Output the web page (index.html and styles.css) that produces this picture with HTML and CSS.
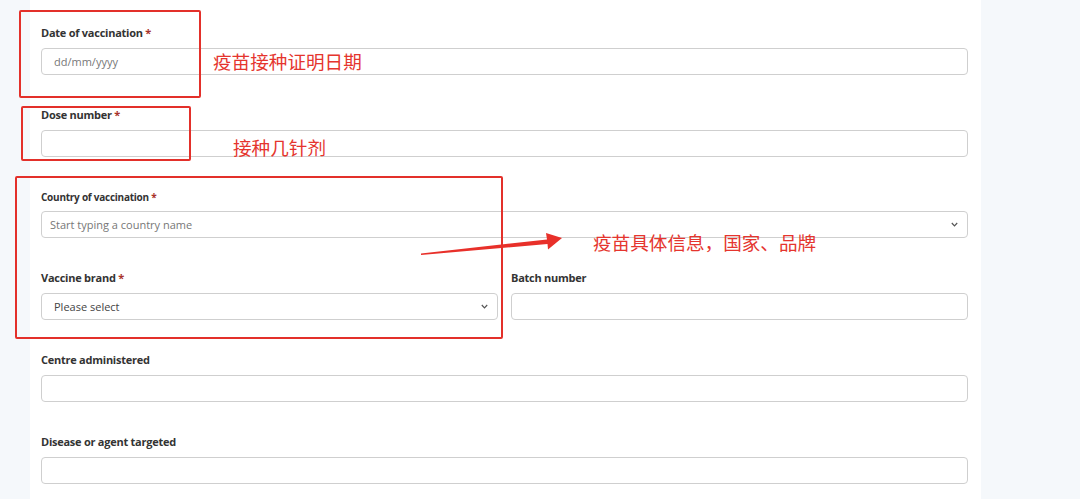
FILE: index.html
```html
<!DOCTYPE html>
<html lang="en">
<head>
  <meta charset="UTF-8" />
  <meta name="viewport" content="width=device-width, initial-scale=1.0"/>
  <title>Vaccination details</title>
  <link rel="stylesheet" href="styles.css">
</head>
<body>
  <div class="form-panel">
    <form>

      <div class="field">
        <label for="vacc_date">Date of vaccination <span class="req">*</span></label>
        <input type="text" id="vacc_date" class="input input-date" placeholder="dd/mm/yyyy">
      </div>

      <div class="field">
        <label for="dose">Dose number <span class="req">*</span></label>
        <input type="text" id="dose" class="input">
      </div>

      <div class="field">
        <label for="country" class="label-small">Country of vaccination <span class="req">*</span></label>
        <div class="select-box">
          <input type="text" id="country" class="input input-country" placeholder="Start typing a country name">
          <svg class="chevron" width="7" height="5" viewBox="0 0 7 5"><polyline points="0.8,1 3.5,3.8 6.2,1" fill="none" stroke="#555" stroke-width="1.2"/></svg>
        </div>
      </div>

      <div class="field-row">
        <div class="field">
          <label for="brand">Vaccine brand <span class="req">*</span></label>
          <div class="select-box">
            <div id="brand" class="input input-select">Please select</div>
            <svg class="chevron" width="7" height="5" viewBox="0 0 7 5"><polyline points="0.8,1 3.5,3.8 6.2,1" fill="none" stroke="#555" stroke-width="1.2"/></svg>
          </div>
        </div>
        <div class="field">
          <label for="batch">Batch number</label>
          <input type="text" id="batch" class="input">
        </div>
      </div>

      <div class="field">
        <label for="centre">Centre administered</label>
        <input type="text" id="centre" class="input">
      </div>

      <div class="field">
        <label for="disease">Disease or agent targeted</label>
        <input type="text" id="disease" class="input">
      </div>

    </form>
  </div>

  <!-- annotations drawn over the screenshot -->
  <div class="mark mark-date"></div>
  <div class="mark mark-dose"></div>
  <div class="mark mark-detail"></div>

  <div class="note note-date">疫苗接种证明日期</div>
  <div class="note note-dose">接种几针剂</div>
  <div class="note note-detail">疫苗具体信息，国家、品牌</div>

  <svg class="arrow" width="150" height="32" viewBox="0 0 150 32">
    <polygon points="2,25.5 128,11.5 127,5 143,10 129,21.5 128.5,16 2,27" fill="#e8302a"/>
  </svg>
</body>
</html>
```

FILE: styles.css
```css
/* Page */
* {
  box-sizing: border-box;
}

body {
  margin: 0;
  background: #f5f8fb;
  font-family: 'Open Sans', 'Noto Sans', sans-serif;
  color: #333;
  min-height: 499px;
  position: relative;
}

.form-panel {
  margin-left: 30px;
  width: 951px;
  min-height: 499px;
  background: #fff;
  padding: 26px 13px 0 11px;
}

/* Fields */
.field {
  margin-bottom: 33px;
}

.field label {
  display: block;
  font-size: 11px;
  line-height: 14px;
  font-weight: 700;
  color: #333;
  margin-bottom: 8px;
  letter-spacing: -0.25px;
}

.field label.label-small {
  font-size: 10px;
  margin-bottom: 7px;
}

.req {
  color: #a8322a;
}

.field-row {
  display: grid;
  grid-template-columns: 1fr 1fr;
  column-gap: 13px;
}

.input {
  display: block;
  width: 100%;
  height: 27px;
  border: 1px solid #cfcfcf;
  border-radius: 4px;
  background: #fff;
  font-family: 'Open Sans', 'Noto Sans', sans-serif;
  font-size: 11px;
  color: #333;
  padding: 0 12px;
  outline: none;
}

.input::placeholder {
  color: #777;
}

.input-country {
  padding-left: 8px;
}

.input-select {
  line-height: 25px;
  color: #444;
}

.select-box {
  position: relative;
}

.chevron {
  position: absolute;
  right: 10px;
  top: 11px;
}

/* Annotations */
.mark {
  position: absolute;
  border: 2px solid #e3302a;
  border-radius: 2px;
}

.mark-date {
  left: 19px;
  top: 10px;
  width: 182px;
  height: 88px;
}

.mark-dose {
  left: 21px;
  top: 106px;
  width: 170px;
  height: 55px;
}

.mark-detail {
  left: 15px;
  top: 176px;
  width: 488px;
  height: 163px;
}

.note {
  position: absolute;
  font-family: 'Noto Sans CJK SC', sans-serif;
  font-size: 18.6px;
  line-height: 19px;
  color: #e5352e;
  white-space: nowrap;
}

.note-date {
  left: 213px;
  top: 51px;
}

.note-dose {
  left: 233px;
  top: 137px;
}

.note-detail {
  left: 593px;
  top: 232px;
}

.arrow {
  position: absolute;
  left: 419px;
  top: 228px;
}
```
